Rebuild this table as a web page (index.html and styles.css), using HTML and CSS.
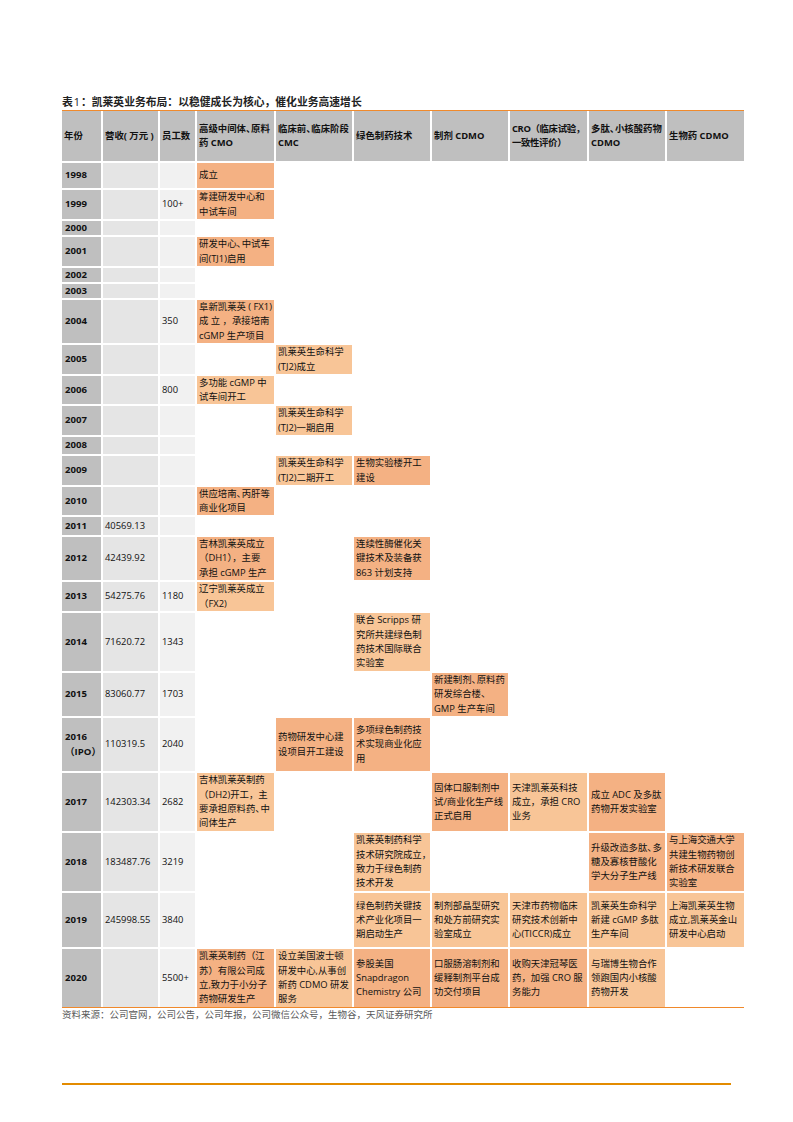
FILE: index.html
```html
<!DOCTYPE html>
<html lang="zh-CN">
<head>
<meta charset="utf-8">
<title>凯莱英业务布局</title>
<link rel="stylesheet" href="styles.css">
</head>
<body>
<div class="page">
  <div class="title">表<span class="num">1</span>：凯莱英业务布局：以稳健成长为核心，催化业务高速增长</div>
  <div class="grid">
    <div class="c h"><span>年份</span></div>
    <div class="c h"><span>营收( 万元 )</span></div>
    <div class="c h"><span>员工数</span></div>
    <div class="c h"><span>高级中间体<span class="p">、</span>原料<br>药 CMO</span></div>
    <div class="c h"><span>临床前<span class="p">、</span>临床阶段<br>CMC</span></div>
    <div class="c h"><span>绿色制药技术</span></div>
    <div class="c h"><span>制剂 CDMO</span></div>
    <div class="c h tight"><span>CRO（临床试验，<br>一致性评价）</span></div>
    <div class="c h"><span>多肽<span class="p">、</span>小核酸药物<br>CDMO</span></div>
    <div class="c h"><span>生物药 CDMO</span></div>

    <div class="c y"><span>1998</span></div><div class="c r"></div><div class="c s"></div>
    <div class="c d"><span>成立</span></div><div class="c"></div><div class="c"></div><div class="c"></div><div class="c"></div><div class="c"></div><div class="c"></div>

    <div class="c y"><span>1999</span></div><div class="c r"></div><div class="c s"><span>100+</span></div>
    <div class="c d"><span>筹建研发中心和<br>中试车间</span></div><div class="c"></div><div class="c"></div><div class="c"></div><div class="c"></div><div class="c"></div><div class="c"></div>

    <div class="c y"><span>2000</span></div><div class="c r"></div><div class="c s"></div>
    <div class="c"></div><div class="c"></div><div class="c"></div><div class="c"></div><div class="c"></div><div class="c"></div><div class="c"></div>

    <div class="c y"><span>2001</span></div><div class="c r"></div><div class="c s"></div>
    <div class="c d"><span>研发中心<span class="p">、</span>中试车<br>间(TJ1)启用</span></div><div class="c"></div><div class="c"></div><div class="c"></div><div class="c"></div><div class="c"></div><div class="c"></div>

    <div class="c y"><span>2002</span></div><div class="c r"></div><div class="c s"></div>
    <div class="c"></div><div class="c"></div><div class="c"></div><div class="c"></div><div class="c"></div><div class="c"></div><div class="c"></div>

    <div class="c y"><span>2003</span></div><div class="c r"></div><div class="c s"></div>
    <div class="c"></div><div class="c"></div><div class="c"></div><div class="c"></div><div class="c"></div><div class="c"></div><div class="c"></div>

    <div class="c y"><span>2004</span></div><div class="c r"></div><div class="c s"><span>350</span></div>
    <div class="c d"><span>阜新凯莱英 ( FX1)<br>成 立 ，承接培南<br>cGMP 生产项目</span></div><div class="c"></div><div class="c"></div><div class="c"></div><div class="c"></div><div class="c"></div><div class="c"></div>

    <div class="c y"><span>2005</span></div><div class="c r"></div><div class="c s"></div>
    <div class="c"></div><div class="c l"><span>凯莱英生命科学<br>(TJ2)成立</span></div><div class="c"></div><div class="c"></div><div class="c"></div><div class="c"></div><div class="c"></div>

    <div class="c y"><span>2006</span></div><div class="c r"></div><div class="c s"><span>800</span></div>
    <div class="c l"><span>多功能 cGMP 中<br>试车间开工</span></div><div class="c"></div><div class="c"></div><div class="c"></div><div class="c"></div><div class="c"></div><div class="c"></div>

    <div class="c y"><span>2007</span></div><div class="c r"></div><div class="c s"></div>
    <div class="c"></div><div class="c l"><span>凯莱英生命科学<br>(TJ2)一期启用</span></div><div class="c"></div><div class="c"></div><div class="c"></div><div class="c"></div><div class="c"></div>

    <div class="c y"><span>2008</span></div><div class="c r"></div><div class="c s"></div>
    <div class="c"></div><div class="c"></div><div class="c"></div><div class="c"></div><div class="c"></div><div class="c"></div><div class="c"></div>

    <div class="c y"><span>2009</span></div><div class="c r"></div><div class="c s"></div>
    <div class="c"></div><div class="c l"><span>凯莱英生命科学<br>(TJ2)二期开工</span></div><div class="c d"><span>生物实验楼开工<br>建设</span></div><div class="c"></div><div class="c"></div><div class="c"></div><div class="c"></div>

    <div class="c y"><span>2010</span></div><div class="c r"></div><div class="c s"></div>
    <div class="c d"><span>供应培南<span class="p">、</span>丙肝等<br>商业化项目</span></div><div class="c"></div><div class="c"></div><div class="c"></div><div class="c"></div><div class="c"></div><div class="c"></div>

    <div class="c y"><span>2011</span></div><div class="c r"><span>40569.13</span></div><div class="c s"></div>
    <div class="c"></div><div class="c"></div><div class="c"></div><div class="c"></div><div class="c"></div><div class="c"></div><div class="c"></div>

    <div class="c y"><span>2012</span></div><div class="c r"><span>42439.92</span></div><div class="c s"></div>
    <div class="c d"><span>吉林凯莱英成立<br>（DH1），主要<br>承担 cGMP 生产</span></div><div class="c"></div><div class="c d"><span>连续性酶催化关<br>键技术及装备获<br>863 计划支持</span></div><div class="c"></div><div class="c"></div><div class="c"></div><div class="c"></div>

    <div class="c y"><span>2013</span></div><div class="c r"><span>54275.76</span></div><div class="c s"><span>1180</span></div>
    <div class="c l"><span>辽宁凯莱英成立<br>（FX2)</span></div><div class="c"></div><div class="c"></div><div class="c"></div><div class="c"></div><div class="c"></div><div class="c"></div>

    <div class="c y"><span>2014</span></div><div class="c r"><span>71620.72</span></div><div class="c s"><span>1343</span></div>
    <div class="c"></div><div class="c"></div><div class="c l"><span>联合 Scripps 研<br>究所共建绿色制<br>药技术国际联合<br>实验室</span></div><div class="c"></div><div class="c"></div><div class="c"></div><div class="c"></div>

    <div class="c y"><span>2015</span></div><div class="c r"><span>83060.77</span></div><div class="c s"><span>1703</span></div>
    <div class="c"></div><div class="c"></div><div class="c"></div><div class="c d"><span>新建制剂<span class="p">、</span>原料药<br>研发综合楼<span class="p">、</span><br>GMP 生产车间</span></div><div class="c"></div><div class="c"></div><div class="c"></div>

    <div class="c y"><span>2016<br>（IPO）</span></div><div class="c r"><span>110319.5</span></div><div class="c s"><span>2040</span></div>
    <div class="c"></div><div class="c d"><span>药物研发中心建<br>设项目开工建设</span></div><div class="c d"><span>多项绿色制药技<br>术实现商业化应<br>用</span></div><div class="c"></div><div class="c"></div><div class="c"></div><div class="c"></div>

    <div class="c y"><span>2017</span></div><div class="c r"><span>142303.34</span></div><div class="c s"><span>2682</span></div>
    <div class="c l"><span>吉林凯莱英制药<br>（DH2)开工，主<br>要承担原料药<span class="p">、</span>中<br>间体生产</span></div><div class="c"></div><div class="c"></div><div class="c d"><span>固体口服制剂中<br>试/商业化生产线<br>正式启用</span></div><div class="c l"><span>天津凯莱英科技<br>成立，承担 CRO<br>业务</span></div><div class="c d"><span>成立 ADC 及多肽<br>药物开发实验室</span></div><div class="c"></div>

    <div class="c y"><span>2018</span></div><div class="c r"><span>183487.76</span></div><div class="c s"><span>3219</span></div>
    <div class="c"></div><div class="c"></div><div class="c l"><span>凯莱英制药科学<br>技术研究院成立，<br>致力于绿色制药<br>技术开发</span></div><div class="c"></div><div class="c"></div><div class="c d"><span>升级改造多肽<span class="p">、</span>多<br>糖及寡核苷酸化<br>学大分子生产线</span></div><div class="c d"><span>与上海交通大学<br>共建生物药物创<br>新技术研发联合<br>实验室</span></div>

    <div class="c y"><span>2019</span></div><div class="c r"><span>245998.55</span></div><div class="c s"><span>3840</span></div>
    <div class="c"></div><div class="c"></div><div class="c l"><span>绿色制药关键技<br>术产业化项目一<br>期启动生产</span></div><div class="c l"><span>制剂部晶型研究<br>和处方前研究实<br>验室成立</span></div><div class="c l"><span>天津市药物临床<br>研究技术创新中<br>心(TICCR)成立</span></div><div class="c l"><span>凯莱英生命科学<br>新建 cGMP 多肽<br>生产车间</span></div><div class="c l"><span>上海凯莱英生物<br>成立,凯莱英金山<br>研发中心启动</span></div>

    <div class="c y"><span>2020</span></div><div class="c r"></div><div class="c s"><span>5500+</span></div>
    <div class="c d"><span>凯莱英制药（江<br>苏）有限公司成<br>立,致力于小分子<br>药物研发生产</span></div><div class="c l"><span>设立美国波士顿<br>研发中心,从事创<br>新药 CDMO 研发<br>服务</span></div><div class="c d"><span>参股美国<br>Snapdragon<br>Chemistry 公司</span></div><div class="c d"><span>口服肠溶制剂和<br>缓释制剂平台成<br>功交付项目</span></div><div class="c d"><span>收购天津冠琴医<br>药，加强 CRO 服<br>务能力</span></div><div class="c l"><span>与瑞博生物合作<br>领跑国内小核酸<br>药物开发</span></div><div class="c"></div>
  </div>
  <div class="source">资料来源：公司官网，公司公告，公司年报，公司微信公众号，生物谷，天风证券研究所</div>
  <div class="rule"></div>
</div>
</body>
</html>
```
FILE: styles.css
```css
html, body {
  margin: 0;
  padding: 0;
  background: #ffffff;
}

body {
  font-family: "Open Sans", "Noto Sans CJK SC", sans-serif;
  color: #111111;
}

.page {
  padding: 95px 0 0 62px;
}

.title {
  font-size: 10.8px;
  line-height: 14px;
  height: 14px;
  font-weight: 700;
  color: #222222;
  white-space: nowrap;
  margin-bottom: 1px;
}

.title .num {
  font-weight: 400;
  padding: 0 1px;
}

.grid {
  display: grid;
  width: 682px;
  grid-template-columns: 39px 55px 35px 77px 76px 76px 76px 77px 76px 77px;
  grid-template-rows:
    50px 25px 29px 14px 29px 14px 14px 43px 29px 28px 29px 17px
    29px 28px 18px 43px 29px 58px 43px 53px 58px 58px 54px 58px;
  gap: 2px;
  border-top: 1px solid #f08a2c;
  border-bottom: 1px solid #f0892b;
}

.c {
  display: flex;
  align-items: center;
  padding: 0 2px;
  font-size: 9.4px;
  line-height: 14.3px;
  white-space: nowrap;
  min-width: 0;
}

.p {
  letter-spacing: -0.45em;
}

.h {
  background: #bfbfbf;
  font-weight: 700;
  color: #111111;
}

.h.tight {
  letter-spacing: -0.35px;
}

.y {
  background: #bfbfbf;
  font-weight: 700;
  padding-left: 3px;
  font-size: 9.6px;
}

.r {
  background: #e5e5e5;
}

.s {
  background: #f1f1f1;
}

.d {
  background: #f4b183;
}

.l {
  background: #f8c597;
}

.source {
  font-size: 9.5px;
  line-height: 14px;
  color: #595959;
  white-space: nowrap;
}

.rule {
  width: 669px;
  height: 2px;
  background: #e38b00;
  margin-top: 61px;
}
```
